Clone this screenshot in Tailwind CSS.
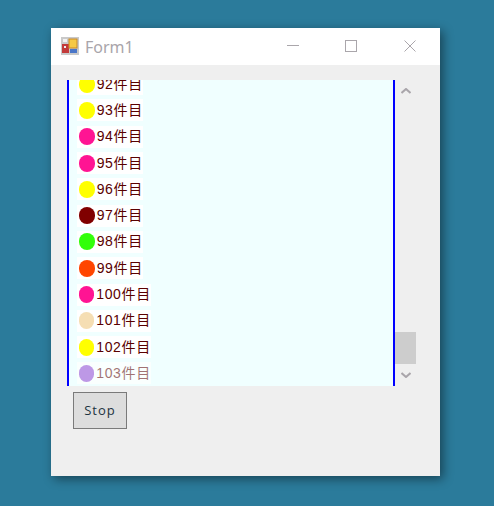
<!DOCTYPE html>
<html lang="en">
<head>
    <meta charset="UTF-8">
    <title>Form1</title>
    <script src="https://cdn.jsdelivr.net/npm/@tailwindcss/browser@4"></script>
</head>
<body class="bg-[#2b7b9b] h-[506px] overflow-hidden pl-[51px] pt-[28px] font-['Noto_Sans','Noto_Sans_CJK_JP',sans-serif]">
    <div class="w-[389px] h-[448px] bg-[#efefef] shadow-[3px_3px_10px_rgba(0,0,0,0.45)] flex flex-col">
        <!-- title bar -->
        <div class="h-[37px] bg-white flex items-center relative">
            <svg class="ml-[10px] mt-[-1px]" width="18" height="18" viewBox="0 0 18 18">
                <rect x="0" y="0" width="18" height="18" fill="#c9c9c9"/>
                <rect x="1" y="7" width="7" height="9" fill="#c23a3a"/>
                <rect x="3" y="9" width="2" height="2" fill="#eee"/>
                <rect x="8" y="2" width="8" height="9" fill="#f6c945" stroke="#c98a2a"/>
                <rect x="9" y="12" width="7" height="4" fill="#4a76c8"/>
                <rect x="2" y="2" width="4" height="3" fill="#f2f2f2"/>
            </svg>
            <span class="ml-[6px] text-[16px] leading-none text-[#a9a5aa]">Form1</span>
            <svg class="absolute left-[236px] top-[12px]" width="12" height="12" viewBox="0 0 12 12"><path d="M0 5.5H12" stroke="#aaa6ab" fill="none"/></svg>
            <svg class="absolute left-[294px] top-[12px]" width="12" height="12" viewBox="0 0 12 12"><rect x="0.5" y="0.5" width="11" height="11" stroke="#aaa6ab" fill="none"/></svg>
            <svg class="absolute left-[353px] top-[12px]" width="12" height="12" viewBox="0 0 12 12"><path d="M0.5 0.5L11.5 11.5M11.5 0.5L0.5 11.5" stroke="#aaa6ab" fill="none"/></svg>
        </div>

        <div class="flex mt-[15px] ml-[16px] h-[306px]">
            <!-- list -->
            <div class="w-[328px] border-x-2 border-[#0000ff] bg-[#f0ffff] overflow-hidden">
                <div class="mt-[-9px] pl-[8px] flex flex-col text-[14px] text-[#5a0000] tracking-[0.7px] font-['Liberation_Sans','Noto_Sans_CJK_JP',sans-serif]">
                    <div class="h-[26.3px] flex items-center"><div class="h-[22px] w-[66px] bg-white flex items-center pl-[2px]"><span class="w-[17px] h-[17px] rounded-full bg-[#ffff00]"></span><span class="ml-[2px] whitespace-nowrap">92件目</span></div></div>
                    <div class="h-[26.3px] flex items-center"><div class="h-[22px] w-[66px] bg-white flex items-center pl-[2px]"><span class="w-[17px] h-[17px] rounded-full bg-[#ffff00]"></span><span class="ml-[2px] whitespace-nowrap">93件目</span></div></div>
                    <div class="h-[26.3px] flex items-center"><div class="h-[22px] w-[66px] bg-white flex items-center pl-[2px]"><span class="w-[17px] h-[17px] rounded-full bg-[#ff1493]"></span><span class="ml-[2px] whitespace-nowrap">94件目</span></div></div>
                    <div class="h-[26.3px] flex items-center"><div class="h-[22px] w-[66px] bg-white flex items-center pl-[2px]"><span class="w-[17px] h-[17px] rounded-full bg-[#ff1493]"></span><span class="ml-[2px] whitespace-nowrap">95件目</span></div></div>
                    <div class="h-[26.3px] flex items-center"><div class="h-[22px] w-[66px] bg-white flex items-center pl-[2px]"><span class="w-[17px] h-[17px] rounded-full bg-[#ffff00]"></span><span class="ml-[2px] whitespace-nowrap">96件目</span></div></div>
                    <div class="h-[26.3px] flex items-center"><div class="h-[22px] w-[66px] bg-white flex items-center pl-[2px]"><span class="w-[17px] h-[17px] rounded-full bg-[#800000]"></span><span class="ml-[2px] whitespace-nowrap">97件目</span></div></div>
                    <div class="h-[26.3px] flex items-center"><div class="h-[22px] w-[66px] bg-white flex items-center pl-[2px]"><span class="w-[17px] h-[17px] rounded-full bg-[#32ff0a]"></span><span class="ml-[2px] whitespace-nowrap">98件目</span></div></div>
                    <div class="h-[26.3px] flex items-center"><div class="h-[22px] w-[66px] bg-white flex items-center pl-[2px]"><span class="w-[17px] h-[17px] rounded-full bg-[#ff4500]"></span><span class="ml-[2px] whitespace-nowrap">99件目</span></div></div>
                    <div class="h-[26.3px] flex items-center"><div class="h-[22px] w-[74px] bg-white flex items-center pl-[2px]"><span class="w-[17px] h-[17px] rounded-full bg-[#ff1493]"></span><span class="ml-[2px] whitespace-nowrap">100件目</span></div></div>
                    <div class="h-[26.3px] flex items-center"><div class="h-[22px] w-[74px] bg-white flex items-center pl-[2px]"><span class="w-[17px] h-[17px] rounded-full bg-[#f5deb3]"></span><span class="ml-[2px] whitespace-nowrap">101件目</span></div></div>
                    <div class="h-[26.3px] flex items-center"><div class="h-[22px] w-[74px] bg-white flex items-center pl-[2px]"><span class="w-[17px] h-[17px] rounded-full bg-[#ffff00]"></span><span class="ml-[2px] whitespace-nowrap">102件目</span></div></div>
                    <div class="h-[26.3px] flex items-center"><div class="h-[22px] w-[74px] bg-[#fafffe] flex items-center pl-[2px]"><span class="w-[17px] h-[17px] rounded-full bg-[#bd98e6]"></span><span class="ml-[2px] whitespace-nowrap opacity-55">103件目</span></div></div>
                </div>
            </div>
            <!-- scrollbar -->
            <div class="w-[21px] flex flex-col items-center">
                <svg class="mt-[8px]" width="10" height="6" viewBox="0 0 10 6"><path d="M0.5 5L5 1L9.500 5" stroke="#a9a5aa" stroke-width="2" fill="none"/></svg>
                <div class="w-[21px] h-[32px] bg-[#cdcdcd] mt-[238px]"></div>
                <svg class="mt-[8px]" width="10" height="6" viewBox="0 0 10 6"><path d="M0.5 1L5 5L9.500 1" stroke="#a9a5aa" stroke-width="2" fill="none"/></svg>
            </div>
        </div>

        <button class="mt-[6px] ml-[22px] w-[54px] h-[37px] border border-[#7a7a7a] bg-[#dddddd] pt-[1px] text-[13px] text-[#1c3340] tracking-[1px] font-['Open_Sans',sans-serif]">Stop</button>
    </div>
</body>
</html>
